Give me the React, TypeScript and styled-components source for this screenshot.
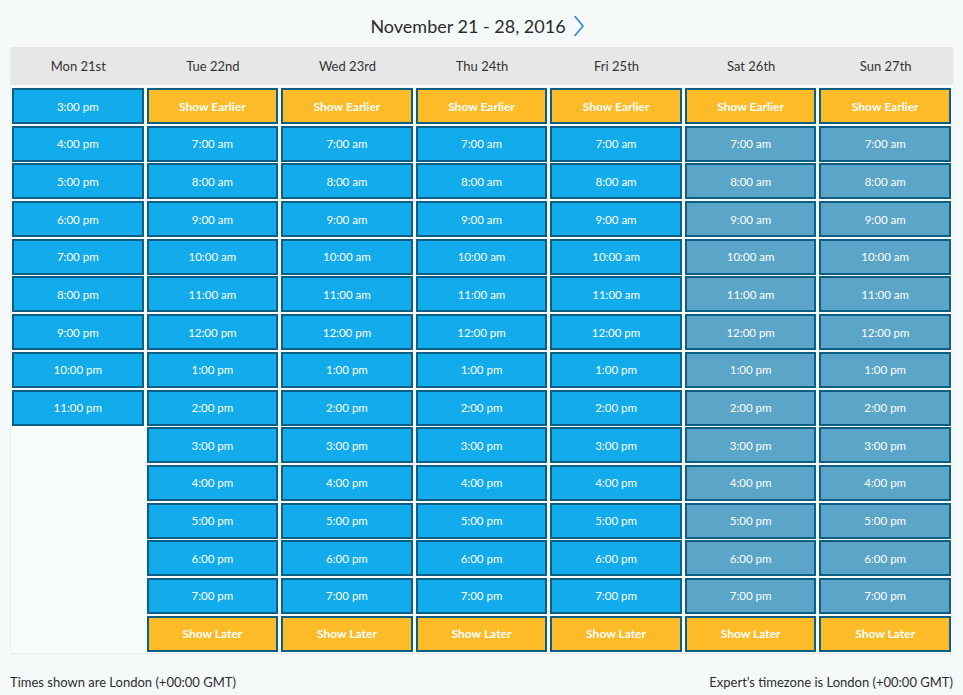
import styled, { createGlobalStyle } from "styled-components";

const GlobalStyle = createGlobalStyle`
  body {
    margin: 0;
    background: #f5f9fa;
    font-family: Lato, "Liberation Sans", sans-serif;
    color: #333;
  }
`;

const Page = styled.div`
  width: 963px;
  height: 695px;
  padding: 0 10px;
  box-sizing: border-box;
  display: flex;
  flex-direction: column;
  & > * {
    flex-shrink: 0;
  }
`;

const TitleBar = styled.div`
  height: 47px;
  display: flex;
  align-items: center;
  justify-content: center;
  gap: 7px;
  padding: 4px 8px 0 0;
  box-sizing: border-box;
`;

const Title = styled.h1`
  margin: 0;
  font-size: 18px;
  font-weight: 400;
  color: #2b2b2b;
`;

const NextButton = styled.button`
  all: unset;
  cursor: pointer;
  display: flex;
  align-items: center;
  color: #2b86e0;
`;

const Calendar = styled.div`
  background: #f8fbfc;
  border-left: 1px solid #ebefef;
  border-bottom: 1px solid #e3e8e9;
  box-shadow: 1px 0 0 #eef2f3;
  height: 607px;
  box-sizing: border-box;
`;

const HeaderRow = styled.div`
  display: grid;
  grid-template-columns: repeat(7, 1fr);
  background: #e7e7e7;
  height: 38px;
`;

const DayLabel = styled.div`
  display: flex;
  align-items: center;
  justify-content: center;
  font-size: 13px;
  color: #333;
`;

const Columns = styled.div`
  display: grid;
  grid-template-columns: repeat(7, 1fr);
  column-gap: 3px;
  padding: 3px 2px 0 1px;
`;

const DayColumn = styled.div`
  display: flex;
  flex-direction: column;
  gap: 1.7px;
`;

type Kind = "slot" | "weekend" | "more";

const colorsFor: Record<Kind, string> = {
  slot: "#12abeb",
  weekend: "#5ba6c8",
  more: "#fdbb27",
};

const Slot = styled.button<{ $kind: Kind }>`
  all: unset;
  cursor: pointer;
  box-sizing: border-box;
  height: 36px;
  border: 2px solid #0d5f86;
  background: ${(p) => colorsFor[p.$kind]};
  color: #fff;
  font-size: ${(p) => (p.$kind === "more" ? "12px" : "11.5px")};
  font-weight: ${(p) => (p.$kind === "more" ? 700 : 400)};
  display: flex;
  align-items: center;
  justify-content: center;
`;

const Footer = styled.div`
  display: flex;
  justify-content: space-between;
  align-items: flex-end;
  height: 41px;
  padding-bottom: 5px;
  box-sizing: border-box;
  font-size: 13px;
  color: #2d2d2d;
`;

const days = [
  "Mon 21st",
  "Tue 22nd",
  "Wed 23rd",
  "Thu 24th",
  "Fri 25th",
  "Sat 26th",
  "Sun 27th",
];

const fullDay = [
  "7:00 am",
  "8:00 am",
  "9:00 am",
  "10:00 am",
  "11:00 am",
  "12:00 pm",
  "1:00 pm",
  "2:00 pm",
  "3:00 pm",
  "4:00 pm",
  "5:00 pm",
  "6:00 pm",
  "7:00 pm",
];

const monday = [
  "3:00 pm",
  "4:00 pm",
  "5:00 pm",
  "6:00 pm",
  "7:00 pm",
  "8:00 pm",
  "9:00 pm",
  "10:00 pm",
  "11:00 pm",
];

export default function App() {
  return (
    <>
      <GlobalStyle />
      <Page>
        <TitleBar>
          <Title>November 21 - 28, 2016</Title>
          <NextButton aria-label="Next week">
            <svg width="12" height="22" viewBox="0 0 12 22" fill="none">
              <path
                d="M2 1.5 L10 11 L2 20.5"
                stroke="currentColor"
                strokeWidth="1.6"
                strokeLinecap="round"
                strokeLinejoin="round"
              />
            </svg>
          </NextButton>
        </TitleBar>
        <Calendar>
          <HeaderRow>
            {days.map((d) => (
              <DayLabel key={d}>{d}</DayLabel>
            ))}
          </HeaderRow>
          <Columns>
            {days.map((d, i) => {
              if (i === 0) {
                return (
                  <DayColumn key={d}>
                    {monday.map((t) => (
                      <Slot key={t} $kind="slot">
                        {t}
                      </Slot>
                    ))}
                  </DayColumn>
                );
              }
              const weekend = i >= 5;
              return (
                <DayColumn key={d}>
                  <Slot $kind="more">Show Earlier</Slot>
                  {fullDay.map((t) => (
                    <Slot key={t} $kind={weekend ? "weekend" : "slot"}>
                      {t}
                    </Slot>
                  ))}
                  <Slot $kind="more">Show Later</Slot>
                </DayColumn>
              );
            })}
          </Columns>
        </Calendar>
        <Footer>
          <span>Times shown are London (+00:00 GMT)</span>
          <span>Expert’s timezone is London (+00:00 GMT)</span>
        </Footer>
      </Page>
    </>
  );
}
